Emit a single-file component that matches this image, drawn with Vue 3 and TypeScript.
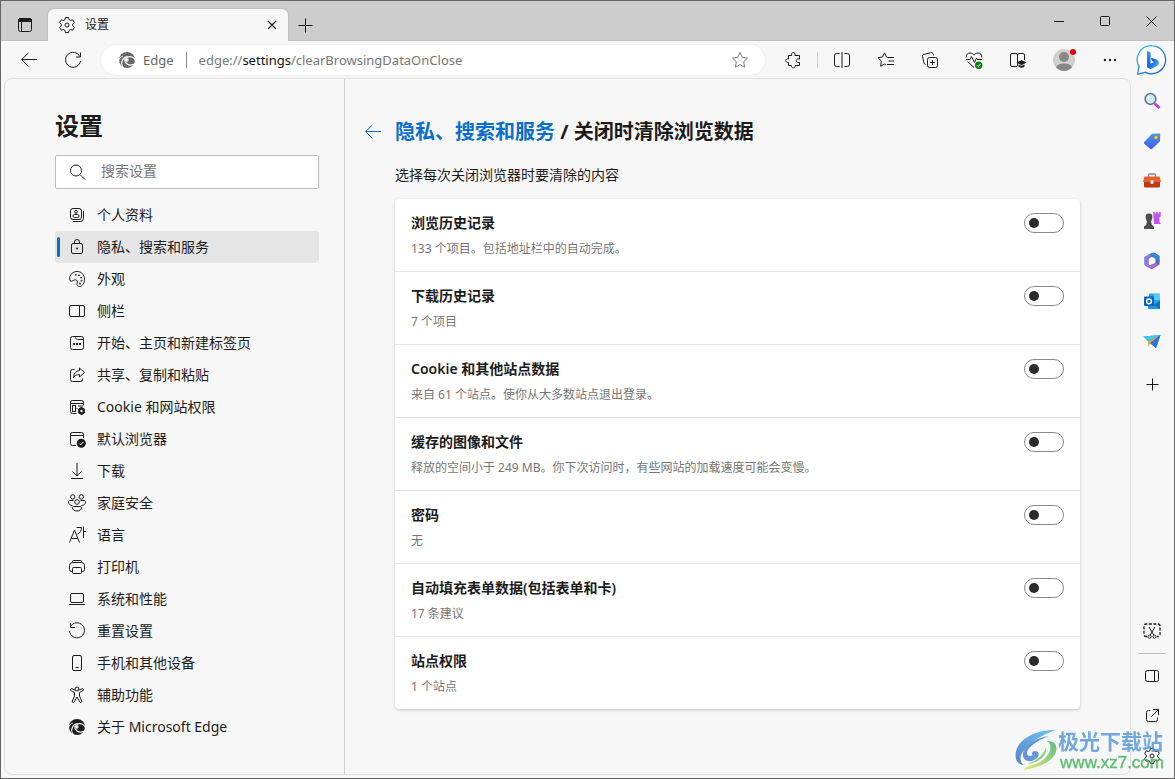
<script setup lang="ts">
import { ref } from 'vue'

const edgeMark =
  '<mask id="edge-swirl"><rect width="20" height="20" fill="#fff"/><g fill="none" stroke="#000" stroke-width="1.300" stroke-linecap="round"><path d="M18.500 10.500C17 7 13.500 5.800 10.500 7 8 8 7.500 10.500 8.500 12.500"/><path d="M7 18.500C4.300 15.500 4 11.500 6.300 8.800 7.500 7.400 9 6.800 10.500 7"/><path d="M8.500 12C9.800 14.700 13 16 17.500 14"/><path d="M1.500 11C2 8.500 3.500 6.800 5.500 6.200" stroke-width="1"/></g><circle cx="9.500" cy="9.800" r="1.900" fill="#000"/></mask><circle cx="10" cy="10" r="8" fill="currentColor" stroke="none" mask="url(#edge-swirl)"/>'

const gear =
  '<path d="M8.400 2.500h3.200l.5 2.200 1.500.8 2.100-.7 1.700 2.800-1.700 1.500v1.800l1.700 1.500-1.700 2.800-2.100-.7-1.500.8-.5 2.200H8.400l-.5-2.200-1.500-.8-2.100.7-1.700-2.800 1.700-1.500V9.100L2.600 7.600l1.700-2.800 2.100.7 1.500-.8z" stroke-linejoin="round"/><circle cx="10" cy="10" r="2"/>'

const icons: Record<string, string> = {
  edge: edgeMark,
  gear,
  workspace:
    '<rect x="3.500" y="3.500" width="13" height="13" rx="2"/><path d="M3.500 5.500c0-1.500.8-2 2-2h9c1.200 0 2 .5 2 2v1h-13z" fill="currentColor"/><path d="M6.500 6.500v10"/>',
  close: '<path d="M6 6l8 8M14 6l-8 8" stroke-width="1.200"/>',
  plus: '<path d="M10.500 3.500v14M3.500 10.500h14"/>',
  plusSmall: '<path d="M10.500 4.500v12M4.500 10.500h12"/>',
  minimize: '<path d="M5 10.500h10"/>',
  maximize: '<rect x="5.500" y="5.500" width="9" height="9" rx="1"/>',
  closeWindow: '<path d="M5.500 5.500l10 10M15.500 5.500l-10 10"/>',
  back: '<path d="M18 9.500H2.500M9.500 3L2.500 9.500l7 7"/>',
  reload: '<path d="M16.800 6.500A7.500 7.500 0 1 0 17.500 11M17.500 2.500v4.500H13"/>',
  star: '<path d="M10 2.500l2.300 4.900 5.200.7-3.800 3.700.9 5.400L10 14.600l-4.600 2.600.9-5.400L2.500 8.100l5.200-.7z" stroke-linejoin="round"/>',
  puzzle:
    '<path d="M5.500 5.500h3.200C8 3.800 9 2.500 10.300 2.500s2.300 1.300 1.600 3h4.600v3.600c-2-.5-3.200.2-3.200 1.600s1.200 2 3.200 1.600v3.200h-4.300c.2 1.400-.7 2.300-1.900 2.300s-2.200-.9-1.900-2.300H5.500v-3.200c-1.700.4-2.700-.4-2.700-1.700S4 8.500 5.500 9z" stroke-linejoin="round"/>',
  split:
    '<path d="M7.500 3.500H4.500a2 2 0 0 0-2 2v9a2 2 0 0 0 2 2h3M12.500 3.500h3a2 2 0 0 1 2 2v9a2 2 0 0 1-2 2h-3M10 2v16"/>',
  favorites:
    '<path d="M11.800 7.500L10.500 7 8.500 2.800 6.500 7l-4.300.7 3.200 3.500-.8 5 3.900-2.100 1.500.9M11.800 7.500H18M12.500 11h5.500M11 14.500h7" stroke-linejoin="round"/>',
  collections:
    '<rect x="7.500" y="7.500" width="10" height="10" rx="2"/><path d="M12.500 10v5M10 12.500h5M5.500 14.500c-.8-.2-1.200-.7-1.500-1.500L2.600 6.700c-.3-1.200.2-2 1.400-2.300L10.800 2.700c1.200-.3 2 .2 2.400 1.400l.3 1.400"/>',
  health:
    '<path d="M2.200 7.500c-.3-3 1.500-4.500 3.800-4.500 1.800 0 3 .8 4 2.200C11 3.800 12.200 3 14 3c2.300 0 4.100 1.500 3.800 4.500M3.500 11.500l6.500 6M2 9.500h4l1.500-3 3 6 2-4.500 1 1.500H18"/><circle cx="14.700" cy="15.200" r="3.700" fill="#107c10" stroke="none"/><path d="M13 15.300l1.200 1.200 2.300-2.500" stroke="#fff"/>',
  reader:
    '<path d="M9 16.500H4a1.500 1.500 0 0 1-1.500-1.500V5A1.500 1.500 0 0 1 4 3.500h4A1.500 1.500 0 0 1 9.500 5v10a1.500 1.500 0 0 1-.5 1.500M9.500 5A1.500 1.500 0 0 1 11 3.500h4A1.500 1.500 0 0 1 16.500 5v5"/><path d="M13.500 10l5 2.600-5 2.600-5-2.600zM10.500 14.600l3 1.500 3-1.500v1.900c-1.500 1.600-4.500 1.600-6 0z" fill="currentColor" stroke="none"/>',
  more: '<g fill="currentColor" stroke="none"><circle cx="5" cy="10" r="1.200"/><circle cx="10" cy="10" r="1.200"/><circle cx="15" cy="10" r="1.200"/></g>',
  search: '<circle cx="9" cy="8.500" r="5.500"/><path d="M13 12.500l5 5"/>',
  profile:
    '<rect x="3.500" y="3.500" width="11" height="11" rx="2.500"/><path d="M16.500 6v7.500a3 3 0 0 1-3 3H6"/><circle cx="9" cy="6.800" r="1.400"/><rect x="6" y="9.500" width="6" height="3" rx="1.500"/>',
  lock: '<rect x="4.500" y="6.500" width="11" height="10" rx="1.500"/><path d="M7.500 6.500V5a2.500 2.500 0 0 1 5 0v1.500"/><circle cx="10" cy="11.500" r="1" fill="currentColor" stroke="none"/>',
  palette:
    '<path d="M3 11.400C1.500 8 4.500 2.500 10 2.500c4.500 0 7.500 3.300 7.500 7.500s-2.300 7.500-5 7.500c-2.800 0-2.700-2-2.300-4 .3-2-.7-3-2.500-2.600S4 13.200 3 11.400z"/><g fill="currentColor" stroke="none"><circle cx="8.800" cy="5.800" r=".9"/><circle cx="12" cy="6.300" r=".9"/><circle cx="14.200" cy="8.600" r=".9"/><circle cx="14.500" cy="11.600" r=".9"/><circle cx="13" cy="14.500" r=".9"/></g>',
  sidebar: '<rect x="2.500" y="4.500" width="15" height="11" rx="1.500"/><path d="M12.500 4.500v11"/>',
  sidebarNarrow: '<rect x="3.500" y="4.500" width="13" height="11" rx="2"/><path d="M12.500 4.500v11"/>',
  startPage:
    '<rect x="3.500" y="3.500" width="13" height="13" rx="2"/><path d="M8.500 3.500c0 2 .5 3 2 3h6"/><path d="M6 11h2M9 11h2M12 11h2" stroke-width="2"/>',
  share:
    '<path d="M7.500 4.500h-2a2 2 0 0 0-2 2v8a2 2 0 0 0 2 2h8a2 2 0 0 0 2-2v-1"/><path d="M12.500 3l5 4.500-5 4.500V9.500c-3 0-4.600 1-6 3 .2-4 2.300-6.500 6-7z" stroke-linejoin="round"/>',
  cookies:
    '<path d="M9.500 16.500h-4a2 2 0 0 1-2-2v-9a2 2 0 0 1 2-2h9a2 2 0 0 1 2 2v3M3.500 6.500h13M11 9h5M9.500 11.500h1"/><rect x="5.500" y="8.500" width="3" height="6"/><path d="M13.700 10.500h1.600l.4 1.300 1.200-.3.900 1.400-.9 1.100.9 1.200-.9 1.300-1.200-.3-.4 1.300h-1.600l-.4-1.300-1.200.3-.9-1.300.9-1.200-.9-1.100.9-1.400 1.200.3z" fill="currentColor"/><circle cx="14.500" cy="14" r="1.200" fill="#f7f7f7" stroke="none"/>',
  defaultBrowser:
    '<path d="M9 16.500H5.500a2 2 0 0 1-2-2v-9a2 2 0 0 1 2-2h9a2 2 0 0 1 2 2V9M3.500 6.500h13"/><circle cx="14.300" cy="14.300" r="4.500" fill="currentColor" stroke="none"/><path d="M12.300 14.500l1.400 1.400 2.700-3" stroke="#f7f7f7"/>',
  download: '<path d="M10 2v13M5.500 10.500L10 15l4.500-4.500M4 17.500h12"/>',
  family:
    '<circle cx="5.700" cy="3.900" r="2.200"/><circle cx="14.300" cy="3.900" r="2.200"/><circle cx="10" cy="9" r="2.300"/><path d="M6.500 7.500H3c-1 0-1.500.7-1.500 1.500 0 2 1.500 3.500 4 3.500M13.500 7.500H17c1 0 1.500.7 1.500 1.500 0 2-1.500 3.500-4 3.500M7 13.500h6c1 0 1.500.5 1.500 1.300 0 1.700-1.700 3.200-4.500 3.200s-4.500-1.500-4.500-3.200c0-.8.500-1.300 1.500-1.300z"/>',
  language:
    '<path d="M2.500 17.500L7.500 5l5 12.500M4.200 13.500h6.600M9.500 2.500h5c0 3.500-1.500 5.500-4 6.500M16.500 1.500v11.500M16.500 6.500H19"/>',
  printer:
    '<path d="M5.500 14.500h-1a2 2 0 0 1-2-2v-4a3 3 0 0 1 3-3h9a3 3 0 0 1 3 3v4a2 2 0 0 1-2 2h-1M5.500 5.500v-1a1 1 0 0 1 1-1h7a1 1 0 0 1 1 1v1"/><rect x="5.500" y="10.500" width="9" height="6" rx="1"/>',
  laptop: '<rect x="3.500" y="4.500" width="13" height="9" rx="1.500"/><path d="M2 15.500h16"/>',
  reset: '<path d="M3.500 5.500A7.500 7.500 0 1 1 2.500 10M3.500 2v4.500H8"/>',
  phone: '<rect x="5.500" y="2.500" width="9" height="15" rx="1.500"/><path d="M8.500 14.500h3"/>',
  accessibility:
    '<circle cx="10" cy="4" r="1.900"/><path d="M8.200 5.200L5 3.800c-1.500-.3-2 1.300-.8 2L7.500 7.500V11l-2.200 5c-.4 1.600 1.200 2 1.800 1l2.900-5 2.900 5c.6 1 2.200.6 1.800-1l-2.200-5V7.500l3.300-1.700c1.200-.7.7-2.300-.8-2l-3.200 1.400" stroke-linejoin="round"/>',
  snip: '<path d="M5 15.500H4a2 2 0 0 1-2-2V5a2 2 0 0 1 2-2h12a2 2 0 0 1 2 2v8.500a2 2 0 0 1-2 2h-1" stroke-dasharray="3 1.500" stroke-width="1.300"/><path d="M7 6l4.800 8M13 6l-4.800 8"/><circle cx="7.500" cy="15.700" r="1.600"/><circle cx="12.500" cy="15.700" r="1.600"/>',
  openExternal:
    '<path d="M8.500 4.500h-2a2 2 0 0 0-2 2v7a2 2 0 0 0 2 2h7a2 2 0 0 0 2-2v-2M11 3.500h5.500V9M16.500 3.500L9.500 10.500"/>',
  avatar:
    '<circle cx="12" cy="12" r="11" fill="#d2d0ce" stroke="none"/><circle cx="12" cy="9" r="5" fill="#8a8886" stroke="none"/><path d="M4 19.500c1-3 4-4 8-4s7 1 8 4c-4.500 4.500-11.500 4.500-16 0z" fill="#8a8886" stroke="none"/>',
  bing:
    '<defs><linearGradient id="bubble" x1="0" y1="0" x2="1" y2="1"><stop offset="0" stop-color="#2cc0e8"/><stop offset="1" stop-color="#2454c8"/></linearGradient><linearGradient id="bee" x1="0" y1="0" x2="1" y2="1"><stop offset="0" stop-color="#22a5f1"/><stop offset=".5" stop-color="#1c60dc"/><stop offset="1" stop-color="#5ad2f5"/></linearGradient></defs><path d="M16 1.700a14 14 0 1 1-6.500 26.600L1.700 30.200 3 22.500A14 14 0 0 1 16 1.700z" fill="#fff" stroke="url(#bubble)" stroke-width="1.300"/><path d="M11 7l3.500 1.200v11.600l3.500-1.900-1.900-1-1.400-3.300 5.500 2c3.400 1.200 3.600 4.800.8 6.500l-6.400 3.200-3.600-2.100z" fill="url(#bee)" stroke="none"/>',
  glass:
    '<path d="M12.500 12.500l5 4.500" stroke="#b93ce8" stroke-width="2.800"/><circle cx="8.500" cy="8" r="5.400" fill="#c9e9fa" stroke="#666b70" stroke-width="1.500"/><path d="M5.500 8a3 3 0 0 1 3-3" stroke="#fff"/>',
  tag: '<defs><linearGradient id="tag" x1="0" y1="0" x2="0" y2="1"><stop offset="0" stop-color="#409cf0"/><stop offset="1" stop-color="#4659e8"/></linearGradient></defs><path d="M10 2.700l7-.2c.8 0 1.200.4 1.200 1.200l-.2 6.500-7.800 7.600c-.7.700-1.400.7-2.100 0L2.500 13c-.7-.7-.7-1.600 0-2.300z" fill="url(#tag)" stroke="none"/><circle cx="14" cy="6.500" r="2" fill="#ffd23e" stroke="#8a6a1c" stroke-width=".5"/>',
  toolbox:
    '<path d="M6.500 6V4.500A1.500 1.500 0 0 1 8 3h4a1.500 1.500 0 0 1 1.500 1.500V6" stroke="#8b9096" stroke-width="1.500"/><path d="M2.500 5.500h15L19 11H1z" fill="#e8602c" stroke="none"/><path d="M2 11h16v4.500a1 1 0 0 1-1 1H3a1 1 0 0 1-1-1z" fill="#b83a16" stroke="none"/><rect x="8.500" y="9" width="3" height="4" rx="1" fill="#dde1e5" stroke="none"/>',
  games:
    '<path d="M11 1h1.700v1.400H14V1h1.700v1.400H17V1h1.700v4.500l-1.300 1v4.200l1.600 2.300h-7z" fill="#c255f0" stroke="none"/><g fill="#4b4b4b" stroke="none"><circle cx="7" cy="6" r="3.400"/><path d="M4.300 8.200h5.400v1.500H8.900l1 4.300 2.100 1.500V18H2v-2.500L4.100 14l1-4.300h-.8z"/></g>',
  office:
    '<path d="M8.500 2.500L13 2l4.500 3v5.500L13.500 8 9 5.500z" fill="#32a8df" stroke="none"/><path d="M8.500 2.500L2.500 6v8l4 2.500V8l5-3.500V2z" fill="#7959c9" stroke="none"/><path d="M4 15l6 3 7.500-4.500V9l-4-2v4.500L7 15z" fill="#5261c4" stroke="none"/><path d="M2.500 6v7l2 2.500 2-.5V8l4-3-2-2.500z" fill="#8b7ce0" stroke="none"/><path d="M9 2.500L12 1.500l5.500 3.300v5.700l-4-2V7L8 5z" fill="#3f83cf" stroke="none"/><path d="M13 8v4l-3 1.800L7 12V8l3-1.800z" fill="#f7f7f7" stroke="none"/><path d="M4 15.500l9.500-3.500 4 1.500L10 18z" fill="#a56bd5" stroke="none"/>',
  outlook:
    '<rect x="7" y="2.500" width="11" height="13" rx="1" fill="#28a8ea" stroke="none"/><path d="M12 3h6v6h-6z" fill="#50d0f8" stroke="none"/><path d="M6 10l6 3.500 6-4V17a1 1 0 0 1-1 1H6z" fill="#199be2" stroke="none"/><path d="M18 10l-7 4 7 4z" fill="#0a72bd" stroke="none"/><rect x="2" y="5.500" width="10" height="9.500" rx="1" fill="#0563b5" stroke="none"/><circle cx="7" cy="10.300" r="2.400" stroke="#fff" stroke-width="1.500"/>',
  drop: '<path d="M1.500 5.500L18.500 4 14 17l-4-3.500z" fill="#2e83e6" stroke="none"/><path d="M1.500 5.500L18.500 4 6 10.500z" fill="#45c5f3" stroke="none"/><path d="M6 10.500L18.500 4 8 12.200 6.500 16z" fill="#f4a31c" stroke="none"/><path d="M8 12.200L18.500 4 14 17z" fill="#2f72df" stroke="none"/>',
}

interface NavItem {
  icon: string
  label: string
}

const navItems: NavItem[] = [
  { icon: 'profile', label: '个人资料' },
  { icon: 'lock', label: '隐私、搜索和服务' },
  { icon: 'palette', label: '外观' },
  { icon: 'sidebar', label: '侧栏' },
  { icon: 'startPage', label: '开始、主页和新建标签页' },
  { icon: 'share', label: '共享、复制和粘贴' },
  { icon: 'cookies', label: 'Cookie 和网站权限' },
  { icon: 'defaultBrowser', label: '默认浏览器' },
  { icon: 'download', label: '下载' },
  { icon: 'family', label: '家庭安全' },
  { icon: 'language', label: '语言' },
  { icon: 'printer', label: '打印机' },
  { icon: 'laptop', label: '系统和性能' },
  { icon: 'reset', label: '重置设置' },
  { icon: 'phone', label: '手机和其他设备' },
  { icon: 'accessibility', label: '辅助功能' },
  { icon: 'edge', label: '关于 Microsoft Edge' },
]
const activeNav = ref(1)

interface ClearOption {
  title: string
  detail: string
  enabled: boolean
}

const options = ref<ClearOption[]>([
  { title: '浏览历史记录', detail: '133 个项目。包括地址栏中的自动完成。', enabled: false },
  { title: '下载历史记录', detail: '7 个项目', enabled: false },
  { title: 'Cookie 和其他站点数据', detail: '来自 61 个站点。使你从大多数站点退出登录。', enabled: false },
  { title: '缓存的图像和文件', detail: '释放的空间小于 249 MB。你下次访问时，有些网站的加载速度可能会变慢。', enabled: false },
  { title: '密码', detail: '无', enabled: false },
  { title: '自动填充表单数据(包括表单和卡)', detail: '17 条建议', enabled: false },
  { title: '站点权限', detail: '1 个站点', enabled: false },
])

const toolbarButtons = [
  { icon: 'split', label: '拆分屏幕' },
  { icon: 'favorites', label: '收藏夹' },
  { icon: 'collections', label: '集锦' },
  { icon: 'health', label: '浏览器概要' },
  { icon: 'reader', label: '阅读' },
]

const sideApps = [
  { icon: 'glass', label: '搜索' },
  { icon: 'tag', label: '购物' },
  { icon: 'toolbox', label: '工具' },
  { icon: 'games', label: '游戏' },
  { icon: 'office', label: 'Microsoft 365' },
  { icon: 'outlook', label: 'Outlook' },
  { icon: 'drop', label: 'Drop' },
]

const sideTools = [
  { icon: 'sidebarNarrow', label: '隐藏侧栏' },
  { icon: 'openExternal', label: '打开外部链接' },
  { icon: 'gear', label: '侧栏设置' },
]

const searchText = ref('')
</script>

<template>
  <div class="window">
    <header class="titlebar">
      <button class="icon-button workspace" aria-label="工作区">
        <svg class="icon" viewBox="0 0 20 20" v-html="icons.workspace" />
      </button>
      <div class="tab">
        <svg class="icon" viewBox="0 0 20 20" v-html="icons.gear" />
        <span class="tab-title">设置</span>
        <button class="tab-close" aria-label="关闭标签页">
          <svg class="icon" viewBox="0 0 20 20" v-html="icons.close" />
        </button>
      </div>
      <button class="icon-button new-tab" aria-label="新建标签页">
        <svg class="icon" viewBox="0 0 20 20" v-html="icons.plus" />
      </button>
      <div class="window-controls">
        <button aria-label="最小化"><svg class="icon" viewBox="0 0 20 20" v-html="icons.minimize" /></button>
        <button aria-label="最大化"><svg class="icon" viewBox="0 0 20 20" v-html="icons.maximize" /></button>
        <button aria-label="关闭"><svg class="icon" viewBox="0 0 20 20" v-html="icons.closeWindow" /></button>
      </div>
    </header>

    <div class="toolbar">
      <button class="icon-button" aria-label="后退"><svg class="icon" viewBox="0 0 20 20" v-html="icons.back" /></button>
      <button class="icon-button" aria-label="刷新"><svg class="icon" viewBox="0 0 20 20" v-html="icons.reload" /></button>
      <div class="address">
        <svg class="icon" viewBox="0 0 20 20" v-html="icons.edge" />
        <span class="brand">Edge</span>
        <span class="url">edge://<b>settings</b>/clearBrowsingDataOnClose</span>
        <button class="star" aria-label="收藏"><svg class="icon" viewBox="0 0 20 20" v-html="icons.star" /></button>
      </div>
      <button class="icon-button" aria-label="扩展"><svg class="icon" viewBox="0 0 20 20" v-html="icons.puzzle" /></button>
      <span class="divider"></span>
      <button v-for="b in toolbarButtons" :key="b.icon" class="icon-button" :aria-label="b.label">
        <svg class="icon" viewBox="0 0 20 20" v-html="icons[b.icon]" />
      </button>
      <button class="avatar" aria-label="个人资料">
        <svg viewBox="0 0 24 24" v-html="icons.avatar" />
        <span class="badge"></span>
      </button>
      <button class="icon-button" aria-label="设置及其他"><svg class="icon" viewBox="0 0 20 20" v-html="icons.more" /></button>
      <button class="bing" aria-label="必应"><svg viewBox="0 0 32 32" v-html="icons.bing" /></button>
    </div>

    <div class="body">
      <div class="page">
        <aside class="settings-nav">
          <h1>设置</h1>
          <label class="search">
            <svg class="icon" viewBox="0 0 20 20" v-html="icons.search" />
            <input v-model="searchText" type="search" placeholder="搜索设置" aria-label="搜索设置" />
          </label>
          <nav>
            <a
              v-for="(item, i) in navItems"
              :key="item.icon"
              href="#"
              :class="{ active: i === activeNav }"
              @click.prevent="activeNav = i"
            >
              <svg class="icon" viewBox="0 0 20 20" v-html="icons[item.icon]" />
              <span>{{ item.label }}</span>
            </a>
          </nav>
        </aside>

        <main>
          <div class="heading">
            <button class="page-back" aria-label="返回"><svg class="icon" viewBox="0 0 20 20" v-html="icons.back" /></button>
            <h2><a href="#">隐私、搜索和服务</a> / 关闭时清除浏览数据</h2>
          </div>
          <p class="intro">选择每次关闭浏览器时要清除的内容</p>
          <div class="card">
            <label v-for="option in options" :key="option.title" class="option">
              <span class="option-text">
                <span class="option-title">{{ option.title }}</span>
                <span class="option-detail">{{ option.detail }}</span>
              </span>
              <input v-model="option.enabled" type="checkbox" role="switch" class="toggle" />
            </label>
          </div>
        </main>
      </div>

      <aside class="sidebar">
        <button v-for="app in sideApps" :key="app.icon" :aria-label="app.label">
          <svg class="icon" viewBox="0 0 20 20" v-html="icons[app.icon]" />
        </button>
        <button class="add" aria-label="自定义"><svg class="icon" viewBox="0 0 20 20" v-html="icons.plusSmall" /></button>
        <button class="snip" aria-label="屏幕截图"><svg class="icon" viewBox="0 0 20 20" v-html="icons.snip" /></button>
        <hr />
        <button v-for="tool in sideTools" :key="tool.icon" :aria-label="tool.label">
          <svg class="icon" viewBox="0 0 20 20" v-html="icons[tool.icon]" />
        </button>
      </aside>
    </div>

    <div class="watermark">
      <svg viewBox="0 0 42 42">
        <defs>
          <linearGradient id="wave-blue" x1="0" y1="1" x2="1" y2="0">
            <stop offset="0" stop-color="#4170c0" />
            <stop offset="1" stop-color="#55c0ee" />
          </linearGradient>
          <linearGradient id="wave-green" x1="0" y1="1" x2="1" y2="0">
            <stop offset="0" stop-color="#e6e65a" />
            <stop offset="1" stop-color="#3fb070" />
          </linearGradient>
        </defs>
        <path d="M41 1C22 0 1 10 0.500 26c0 6 3 9.500 8 10-4-4-4-9 0-14C14 14 26 6 41 1z" fill="url(#wave-blue)" />
        <path d="M34 7C20 9 8 17 8 26c0 7 9 8 14 3 3-3 2-7-2-7-3 0-4 3-2 4-3 2-6 1-6-2 0-5 9-12 22-17z" fill="#4c84ce" />
        <path d="M32 12c6 0 9 2 9.500 7C42 30 28 38 8 41c3-3 6-4 10-5 8-2 15-8 17-15 1-5 0-7-3-9z" fill="url(#wave-green)" />
        <path d="M31 18c2 8-7 16-19 17 9-3 17-9 19-17z" fill="#7cc878" />
      </svg>
      <div>
        <strong>极光下载站</strong>
        <span>www.xz7.com</span>
      </div>
    </div>
  </div>
</template>

<style>
body {
  margin: 0;
}
</style>

<style scoped>
.window {
  position: relative;
  display: flex;
  flex-direction: column;
  box-sizing: border-box;
  min-height: 100vh;
  border: 1px solid #666;
  background: #f7f7f7;
  color: #1b1b1b;
  font: 14px/20px "Noto Sans", "Noto Sans CJK SC", sans-serif;
}

button {
  display: flex;
  align-items: center;
  justify-content: center;
  flex: none;
  margin: 0;
  padding: 0;
  border: 0;
  background: none;
  color: #1b1b1b;
  font: inherit;
}

svg {
  display: block;
  flex: none;
}

.icon {
  width: 20px;
  height: 20px;
  fill: none;
  stroke: currentColor;
  stroke-width: 1;
}

.icon-button {
  width: 44px;
  height: 30px;
}

/* Title bar */
.titlebar {
  display: flex;
  height: 40px;
  box-sizing: border-box;
  background: #cdcdcd;
  box-shadow: inset 0 -1px #c0c0c0;
}

.workspace {
  width: 47px;
  height: 32px;
  margin-top: 8px;
  padding-left: 1px;
}

.tab {
  display: flex;
  align-items: center;
  box-sizing: border-box;
  width: 240px;
  height: 32px;
  margin-top: 8px;
  padding: 0 6px 0 9px;
  border-radius: 6px 6px 0 0;
  background: #f7f7f7;
  box-shadow: 0 0 2px rgba(0, 0, 0, 0.2);
  clip-path: inset(-3px -3px 0 -3px);
}

.tab-title {
  flex: 1;
  margin-left: 8px;
  font-size: 12px;
}

.new-tab {
  width: 34px;
  height: 32px;
  margin-top: 8px;
}

.window-controls {
  display: flex;
  margin-left: auto;
}

.window-controls button {
  width: 46px;
  height: 40px;
}

/* Toolbar */
.toolbar {
  display: flex;
  align-items: center;
  padding: 4px 2px 3px 6px;
}

.address {
  display: flex;
  flex: 1;
  align-items: center;
  min-width: 0;
  height: 30px;
  margin: 0 6px;
  padding: 0 15px 0 16px;
  box-sizing: border-box;
  border-radius: 15px;
  background: #fff;
  box-shadow: 0 0 3px rgba(0, 0, 0, 0.08);
  color: #666;
  font-size: 13px;
}

.brand {
  margin-left: 6px;
  padding-right: 12px;
  border-right: 1px solid #8a8a8a;
  line-height: 16px;
}

.url {
  flex: 1;
  margin-left: 12px;
  overflow: hidden;
  white-space: nowrap;
  color: #767676;
}

.url b {
  color: #111;
  font-weight: 400;
}

.star {
  color: #767676;
}

.divider {
  width: 1px;
  height: 16px;
  margin: 0 2px;
  background: #d0d0d0;
}

.avatar {
  position: relative;
  width: 48px;
  height: 30px;
}

.avatar svg {
  width: 24px;
  height: 24px;
}

.badge {
  position: absolute;
  top: 4px;
  right: 12px;
  width: 6px;
  height: 6px;
  border-radius: 50%;
  background: #e8000b;
}

.bing {
  width: 40px;
  height: 30px;
}

.bing svg {
  width: 32px;
  height: 32px;
}

/* Page frame */
.body {
  display: flex;
  flex: 1;
}

.page {
  display: flex;
  flex: 1;
  min-width: 0;
  margin: 0 0 3px 3px;
  border: 1px solid #e0e0e0;
  border-radius: 8px;
}

.settings-nav {
  flex: none;
  box-sizing: border-box;
  width: 340px;
  padding: 31px 25px 16px 50px;
  border-right: 1px solid #d0d0d0;
}

h1 {
  margin: 0 0 13px;
  font-size: 24px;
  line-height: 32px;
}

.search {
  display: flex;
  align-items: center;
  gap: 14px;
  box-sizing: border-box;
  height: 34px;
  margin-bottom: 10px;
  padding: 0 11px;
  border: 1px solid #bababa;
  border-radius: 2px;
  background: #fff;
}

.search input {
  flex: 1;
  min-width: 0;
  padding: 0 0 2px;
  border: 0;
  outline: 0;
  background: none;
  font: inherit;
}

.search input::placeholder {
  color: #767676;
  opacity: 1;
}

nav a {
  position: relative;
  display: flex;
  align-items: center;
  gap: 10px;
  height: 32px;
  padding-left: 12px;
  border-radius: 2px;
  color: #1b1b1b;
  text-decoration: none;
  white-space: nowrap;
}

nav a.active {
  background: #e5e5e5;
}

nav a.active::before {
  content: "";
  position: absolute;
  top: 6px;
  left: 2px;
  width: 3px;
  height: 20px;
  border-radius: 2px;
  background: #0a6ecb;
}

/* Main pane */
main {
  flex: 1;
  min-width: 0;
  padding: 38px 50px 40px 18px;
}

.heading {
  display: flex;
  align-items: center;
  gap: 12px;
}

.page-back {
  color: #0a6ecb;
}

h2 {
  margin: 0;
  font-size: 20px;
  line-height: 30px;
}

h2 a {
  color: #0a6ecb;
  text-decoration: none;
}

.intro {
  margin: 18px 0 14px 32px;
}

.card {
  margin-left: 32px;
  border-radius: 4px;
  background: #fff;
  box-shadow: 0 1px 3px rgba(0, 0, 0, 0.22);
}

.option {
  display: flex;
  align-items: flex-start;
  justify-content: space-between;
  padding: 14px 16px 13px;
  border-bottom: 1px solid #e6e6e6;
}

.option:last-child {
  border-bottom: 0;
}

.option-text {
  display: flex;
  flex-direction: column;
  gap: 7px;
}

.option-title {
  font-weight: 600;
}

.option-detail {
  color: #767676;
  font-size: 12px;
  line-height: 18px;
}

.toggle {
  flex: none;
  box-sizing: border-box;
  width: 40px;
  height: 20px;
  margin: 0;
  padding: 4px;
  border: 1px solid #8a8a8a;
  border-radius: 10px;
  appearance: none;
  background: #fff;
}

.toggle::before {
  content: "";
  display: block;
  width: 10px;
  height: 10px;
  border-radius: 50%;
  background: #2b2b2b;
}

.toggle:checked {
  border-color: #0a6ecb;
  background: #0a6ecb;
}

.toggle:checked::before {
  margin-left: auto;
  background: #fff;
}

/* Right sidebar */
.sidebar {
  display: flex;
  flex: none;
  flex-direction: column;
  align-items: center;
  width: 43px;
  padding: 3px 1px 2px 0;
  box-sizing: border-box;
}

.sidebar button {
  width: 40px;
  height: 40px;
}

.sidebar .add {
  margin-top: 3px;
}

.sidebar .snip {
  margin-top: auto;
}

hr {
  width: 28px;
  height: 1px;
  margin: 2px 0;
  border: 0;
  background: #bdbdbd;
}

/* Site mark laid over the corner */
.watermark {
  position: absolute;
  right: 10px;
  bottom: 6px;
  display: flex;
  align-items: center;
  gap: 1px;
  opacity: 0.85;
  pointer-events: none;
}

.watermark svg {
  width: 42px;
  height: 42px;
}

.watermark div {
  display: flex;
  flex-direction: column;
}

.watermark strong {
  color: #5b9bd9;
  font-size: 21px;
  line-height: 26px;
}

.watermark span {
  padding-left: 2px;
  color: #46b25c;
  font: 17px/18px "Liberation Sans", sans-serif;
  -webkit-text-stroke: 0.4px #46b25c;
}
</style>
